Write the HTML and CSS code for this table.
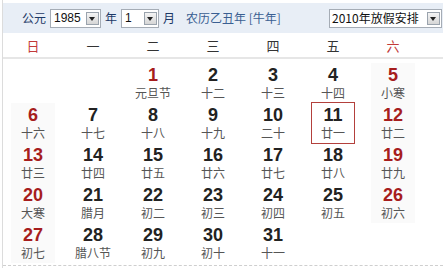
FILE: index.html
```html
<!DOCTYPE html>
<html lang="zh">
<head>
<meta charset="utf-8">
<link rel="stylesheet" href="styles.css">
</head>
<body>
<div class="cal">
  <div class="bar">
    <span class="lbl">公元</span>
    <span class="sel sel-year"><span class="val">1985</span><span class="btn"></span></span>
    <span class="lbl">年</span>
    <span class="sel sel-month"><span class="val">1</span><span class="btn"></span></span>
    <span class="lbl">月</span>
    <span class="lunar">农历乙丑年 [牛年]</span>
    <span class="sel sel-hol"><span class="val cjk">2010年放假安排</span><span class="btn"></span></span>
  </div>
  <div class="week">
    <span class="wd red">日</span><span class="wd">一</span><span class="wd">二</span><span class="wd">三</span><span class="wd">四</span><span class="wd">五</span><span class="wd red">六</span>
  </div>
  <div class="days">
    <div class="c"></div><div class="c"></div>
    <div class="c"><div class="in"><b class="n red">1</b><i class="l">元旦节</i></div></div>
    <div class="c"><div class="in"><b class="n">2</b><i class="l">十二</i></div></div>
    <div class="c"><div class="in"><b class="n">3</b><i class="l">十三</i></div></div>
    <div class="c"><div class="in"><b class="n">4</b><i class="l">十四</i></div></div>
    <div class="c"><div class="in we"><b class="n red">5</b><i class="l">小寒</i></div></div>

    <div class="c"><div class="in we"><b class="n red">6</b><i class="l">十六</i></div></div>
    <div class="c"><div class="in"><b class="n">7</b><i class="l">十七</i></div></div>
    <div class="c"><div class="in"><b class="n">8</b><i class="l">十八</i></div></div>
    <div class="c"><div class="in"><b class="n">9</b><i class="l">十九</i></div></div>
    <div class="c"><div class="in"><b class="n">10</b><i class="l">二十</i></div></div>
    <div class="c"><div class="in today"><b class="n">11</b><i class="l">廿一</i></div></div>
    <div class="c"><div class="in we"><b class="n red">12</b><i class="l">廿二</i></div></div>

    <div class="c"><div class="in we"><b class="n red">13</b><i class="l">廿三</i></div></div>
    <div class="c"><div class="in"><b class="n">14</b><i class="l">廿四</i></div></div>
    <div class="c"><div class="in"><b class="n">15</b><i class="l">廿五</i></div></div>
    <div class="c"><div class="in"><b class="n">16</b><i class="l">廿六</i></div></div>
    <div class="c"><div class="in"><b class="n">17</b><i class="l">廿七</i></div></div>
    <div class="c"><div class="in"><b class="n">18</b><i class="l">廿八</i></div></div>
    <div class="c"><div class="in we"><b class="n red">19</b><i class="l">廿九</i></div></div>

    <div class="c"><div class="in we"><b class="n red">20</b><i class="l">大寒</i></div></div>
    <div class="c"><div class="in"><b class="n">21</b><i class="l">腊月</i></div></div>
    <div class="c"><div class="in"><b class="n">22</b><i class="l">初二</i></div></div>
    <div class="c"><div class="in"><b class="n">23</b><i class="l">初三</i></div></div>
    <div class="c"><div class="in"><b class="n">24</b><i class="l">初四</i></div></div>
    <div class="c"><div class="in"><b class="n">25</b><i class="l">初五</i></div></div>
    <div class="c"><div class="in we"><b class="n red">26</b><i class="l">初六</i></div></div>

    <div class="c"><div class="in we"><b class="n red">27</b><i class="l">初七</i></div></div>
    <div class="c"><div class="in"><b class="n">28</b><i class="l">腊八节</i></div></div>
    <div class="c"><div class="in"><b class="n">29</b><i class="l">初九</i></div></div>
    <div class="c"><div class="in"><b class="n">30</b><i class="l">初十</i></div></div>
    <div class="c"><div class="in"><b class="n">31</b><i class="l">十一</i></div></div>
    <div class="c"></div><div class="c"></div>
  </div>
  <div class="foot"></div>
</div>
</body>
</html>
```
FILE: styles.css
```css
html, body { margin: 0; padding: 0; background: #fff; }
body { font-family: "Noto Sans CJK SC", "Liberation Sans", sans-serif; color: #333; }
.cal {
  margin-left: 2px;
  width: 441px;
  height: 268px;
  border-left: 1px solid #dcdcdc;
  padding-top: 3px;
  box-sizing: border-box;
}
.bar {
  height: 30px;
  background: #e8eef6;
  display: flex;
  align-items: center;
  padding-left: 19px;
  padding-right: 1px;
  font-size: 12px;
  color: #1c3866;
}
.lbl { line-height: 14px; margin-right: 4px; }
.lunar { margin-left: 7px; line-height: 14px; color: #3a5f92; }
.sel {
  display: flex;
  align-items: center;
  justify-content: space-between;
  height: 19px;
  box-sizing: border-box;
  background: #fff;
  border: 1px solid #a5acb5;
  padding: 0 1px 0 3px;
  margin-right: 4px;
}
.sel-year { width: 51px; }
.sel-month { width: 38px; }
.sel-hol { width: 113px; margin-left: auto; margin-right: 0; padding-left: 2px; }
.val { font-family: "Liberation Sans", sans-serif; font-size: 12px; color: #111; line-height: 14px; }
.val.cjk { font-family: "Noto Sans CJK SC", sans-serif; }
.btn {
  position: relative;
  width: 13px;
  height: 13px;
  box-sizing: border-box;
  border: 1px solid #9aa3ad;
  background: linear-gradient(#f4f4f4, #d6d6d6);
}
.btn::after {
  content: "";
  position: absolute;
  left: 2px;
  top: 4px;
  border-left: 3.5px solid transparent;
  border-right: 3.5px solid transparent;
  border-top: 4px solid #222;
}
.week {
  display: grid;
  grid-template-columns: repeat(7, 60px);
  height: 24px;
  align-items: center;
  border-bottom: 2px solid #e6e6e6;
  font-size: 13px;
}
.wd { text-align: center; line-height: 16px; margin-top: 2px; }
.red { color: #a61d1d; }
.wd.red { color: #c23a3a; }
.days {
  display: grid;
  grid-template-columns: repeat(7, 60px);
  grid-auto-rows: 40px;
  margin-top: 4px;
}
.c { display: flex; justify-content: center; }
.in {
  width: 44px;
  height: 40px;
  box-sizing: border-box;
  padding-top: 2px;
  display: flex;
  flex-direction: column;
  align-items: center;
}
.in.we { background: #fafafa; }
.in.today { width: 42px; outline: 1px solid #b3403c; }
.n {
  font-family: "Liberation Sans", Arial, sans-serif;
  font-weight: bold;
  font-size: 18px;
  line-height: 20px;
  color: #222;
}
.n.red { color: #a61d1d; }
.l {
  font-style: normal;
  font-size: 12px;
  line-height: 16px;
  color: #555;
}
.foot { margin-top: 2px; border-top: 1px dashed #cfcfcf; }
```
